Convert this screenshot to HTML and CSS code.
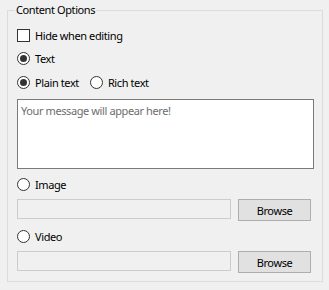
FILE: index.html
```html
<!DOCTYPE html>
<html>

<head>
    <title>Content Options</title>
    <link rel="stylesheet" href="styles.css">
</head>

<body>
    <fieldset class="group">
        <legend>Content Options</legend>

        <label class="row">
            <span class="check"></span>
            Hide when editing
        </label>

        <label class="row">
            <span class="radio on"></span>
            Text
        </label>

        <div class="row gap-1">
            <label class="opt">
                <span class="radio on"></span>
                Plain text
            </label>
            <label class="opt rich">
                <span class="radio"></span>
                Rich text
            </label>
        </div>

        <div class="message gap-2">Your message will appear here!</div>

        <label class="row">
            <span class="radio"></span>
            Image
        </label>
        <div class="file-row">
            <div class="path"></div>
            <button class="browse">Browse</button>
        </div>

        <label class="row">
            <span class="radio"></span>
            Video
        </label>
        <div class="file-row">
            <div class="path"></div>
            <button class="browse">Browse</button>
        </div>
    </fieldset>
</body>

</html>
```

FILE: styles.css
```css
body {
    margin: 0;
    background-color: #f0f0f0;
    font-family: "Noto Sans", sans-serif;
    font-size: 11px;
    letter-spacing: -0.4px;
    color: #000;
}

.group {
    width: 297px;
    margin: 2px 0 0 7px;
    padding: 9px 8px 8px 9px;
    border: 1px solid #dcdcdc;
    display: flex;
    flex-direction: column;
    gap: 7px;
}

.group legend {
    padding: 0 1px;
    margin-left: -2px;
    line-height: 16px;
}

.row {
    display: flex;
    align-items: center;
    height: 16px;
}

.opt {
    display: flex;
    align-items: center;
}

.rich {
    margin-left: 11px;
}

.gap-1 {
    margin-top: 1px;
}

.gap-2 {
    margin-top: 2px;
}

.check {
    width: 11px;
    height: 11px;
    border: 1px solid #333;
    background-color: #fff;
    margin-right: 5px;
}

.radio {
    width: 11px;
    height: 11px;
    border: 1px solid #333;
    border-radius: 50%;
    background-color: #fff;
    margin-right: 5px;
    display: flex;
    align-items: center;
    justify-content: center;
}

.radio.on::after {
    content: "";
    width: 7px;
    height: 7px;
    border-radius: 50%;
    background-color: #333;
}

.message {
    height: 65px;
    padding: 3px 3px 0 3px;
    border: 1px solid #7a7a7a;
    background-color: #fff;
    color: #6d6d6d;
    line-height: 16px;
}

.file-row {
    display: flex;
    align-items: flex-start;
    gap: 7px;
    height: 22px;
}

.path {
    width: 212px;
    height: 18px;
    border: 1px solid #cccccc;
    background-color: #f0f0f0;
}

.browse {
    width: 73px;
    height: 22px;
    padding: 0;
    border: 1px solid #adadad;
    background-color: #e1e1e1;
    font-family: "Noto Sans", sans-serif;
    font-size: 11px;
    letter-spacing: -0.4px;
    color: #000;
}
```
